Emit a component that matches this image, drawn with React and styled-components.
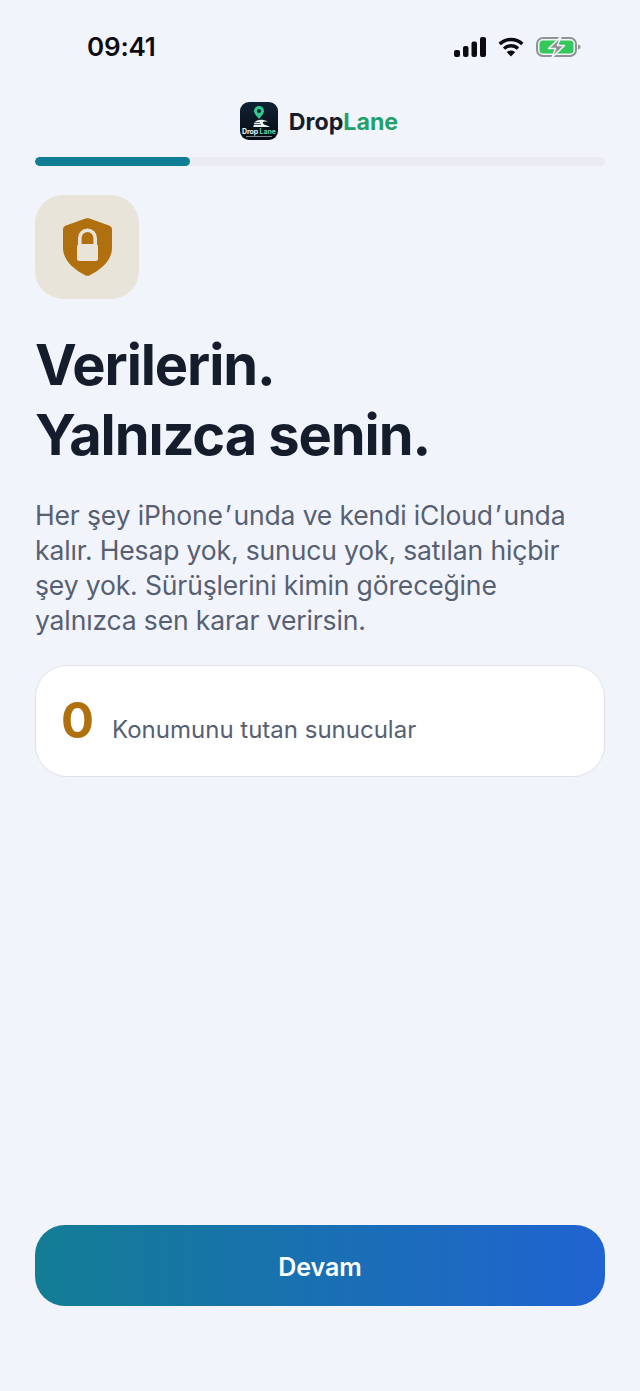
import React from 'react';
import styled, { createGlobalStyle } from 'styled-components';

const Global = createGlobalStyle`
  html, body { margin: 0; padding: 0; background: #f2f4fc; }
  * { box-sizing: border-box; }
`;

const Screen = styled.div`
  width: 640px;
  height: 1391px;
  display: flex;
  flex-direction: column;
  background: #f2f4fc;
  font-family: Inter, "Noto Sans", sans-serif;
  overflow: hidden;
`;

const StatusBar = styled.div`
  height: 102px;
  flex: none;
  display: flex;
  align-items: flex-start;
  justify-content: space-between;
  padding: 31px 59px 0 87px;
`;

const Time = styled.span`
  font-size: 26px;
  line-height: 32px;
  font-weight: 600;
  letter-spacing: -0.2px;
  color: #0c0c10;
`;

const StatusIcons = styled.div`
  display: flex;
  align-items: center;
  gap: 12px;
  height: 32px;
`;

const Brand = styled.div`
  height: 37px;
  flex: none;
  display: flex;
  align-items: center;
  justify-content: center;
  gap: 11px;
  padding-right: 2px;
`;

const LogoTile = styled.div`
  width: 38px;
  height: 38px;
  border-radius: 9px;
  background: linear-gradient(180deg, #0e2334 0%, #070b12 100%);
  display: flex;
  flex-direction: column;
  align-items: center;
  overflow: hidden;
  padding-top: 4px;
`;

const LogoText = styled.span`
  font-size: 7px;
  line-height: 7px;
  font-weight: 700;
  color: #f2f6f5;
  white-space: nowrap;
  letter-spacing: -0.1px;
`;

const LogoGreen = styled.span`
  color: #5fd6ad;
`;

const LogoTagline = styled.span`
  width: 26px;
  height: 1px;
  margin-top: 1px;
  background: #7d8794;
`;

const BrandName = styled.span`
  font-size: 23.2px;
  line-height: 30px;
  font-weight: 700;
  color: #151c2b;
  margin-top: 2px;
`;

const BrandAccent = styled.span`
  color: #23a06a;
`;

const Content = styled.main`
  flex: 1;
  display: flex;
  flex-direction: column;
  padding: 18px 35px 85px;
`;

const Track = styled.div`
  height: 9px;
  border-radius: 5px;
  background: #ebecf1;
  overflow: hidden;
  flex: none;
`;

const Fill = styled.div`
  width: 155px;
  height: 100%;
  border-radius: 5px;
  background: #0f7d94;
`;

const IconTile = styled.div`
  width: 104px;
  height: 104px;
  margin-top: 29px;
  border-radius: 28px;
  background: #e9e4da;
  display: flex;
  align-items: center;
  justify-content: center;
  flex: none;
`;

const Heading = styled.h1`
  margin: 31px 0 0;
  font-size: 56px;
  line-height: 70px;
  font-weight: 700;
  letter-spacing: -1.1px;
  color: #151c2b;
`;

const Body = styled.p`
  margin: 28px 0 0;
  font-size: 26.5px;
  line-height: 35px;
  font-weight: 400;
  letter-spacing: -0.14px;
  color: #566072;
`;

const BodyLine = styled.span`
  display: block;
`;

const Apostrophe = styled.span`
  padding: 0 1.9px;
`;

const StatCard = styled.div`
  margin-top: 27px;
  height: 112px;
  flex: none;
  background: #ffffff;
  border: 1.5px solid #e0e2e7;
  border-radius: 32px;
  display: flex;
  align-items: center;
  gap: 18px;
  padding: 0 25px;
`;

const StatValue = styled.span`
  font-size: 49px;
  line-height: 58px;
  font-weight: 700;
  color: #b0700f;
`;

const StatLabel = styled.span`
  font-size: 24px;
  line-height: 30px;
  color: #566072;
  margin-top: 17px;
`;

const PrimaryButton = styled.button`
  margin-top: auto;
  height: 81px;
  flex: none;
  border: none;
  border-radius: 30px;
  background: linear-gradient(90deg, #137d94 0%, #2063d1 100%);
  color: #ffffff;
  font-family: inherit;
  font-size: 25px;
  font-weight: 600;
  padding: 2px 0 0;
`;

const Signal = () => (
  <svg width="32" height="20" viewBox="0 0 32 20" fill="#0c0c10">
    <rect x="0" y="13" width="6" height="7" rx="2" />
    <rect x="9" y="9" width="5.5" height="11" rx="2" />
    <rect x="17.5" y="4.5" width="5.5" height="15.5" rx="2" />
    <rect x="26" y="0" width="6" height="20" rx="2" />
  </svg>
);

const Wifi = () => (
  <svg width="26" height="20" viewBox="0 0 27 21" fill="none" stroke="#0c0c10" strokeWidth="3.6">
    <path d="M1.6 7.4 C8.2 1 18.8 1 25.4 7.4" />
    <path d="M6.2 12.2 C10.4 8.2 16.6 8.2 20.8 12.2" />
    <path d="M13.5 20.6 L9 15.8 C11.6 13.6 15.4 13.6 18 15.8 Z" fill="#0c0c10" stroke="none" />
  </svg>
);

const Battery = () => (
  <svg width="45" height="22" viewBox="0 0 45 22">
    <rect x="1" y="2" width="39" height="18" rx="6" fill="none" stroke="#8f9492" strokeWidth="2" />
    <rect x="3.5" y="4.5" width="34" height="13" rx="3.5" fill="#34c759" />
    <path d="M42 8.5 C44 9 44.5 10 44.5 11 C44.5 12 44 13 42 13.5 Z" fill="#8f9492" />
    <path d="M25 0.5 L12.5 12.5 L19.5 12.5 L16 21.5 L28.5 9.5 L21.5 9.5 Z" fill="#8f9492" stroke="#f2f4fc" strokeWidth="1.6" strokeLinejoin="round" />
  </svg>
);

const LogoMark = () => (
  <svg width="30" height="22" viewBox="0 0 30 22">
    <path d="M15 13 C11.5 9 10 7 10 5 A5 5 0 0 1 20 5 C20 7 18.5 9 15 13 Z" fill="#31c98e" />
    <circle cx="15" cy="5" r="2" fill="#0e2334" />
    <path d="M9 21 C11 18.5 9 16.5 13 14.5 C16 13.2 20 13.6 24 15.5 C20 15.2 18 16 19 17.6 C20 19 24 19.6 26 21 Z" fill="#eef2f3" />
    <path d="M11 16.5 L16 16.5 M10 18.5 L17 18.5" stroke="#0e2334" strokeWidth="0.7" />
  </svg>
);

const ShieldLock = () => (
  <svg width="49" height="58" viewBox="0 0 49 58">
    <path d="M22.5 0.6 C23.8 0 25.2 0 26.5 0.6 L46 7.6 C48 8.3 49 9.6 49 11.6 L49 30 C49 42 38 52 26.3 57.4 C25.1 58 23.9 58 22.7 57.4 C11 52 0 42 0 30 L0 11.6 C0 9.6 1 8.3 3 7.6 Z" fill="#b0700f" />
    <path d="M16.8 27 L16.8 20 A7.7 7.7 0 0 1 32.2 20 L32.2 27" fill="none" stroke="#e9e4da" strokeWidth="3.6" />
    <rect x="14" y="26" width="21" height="17" rx="2.5" fill="#e9e4da" />
  </svg>
);

export default function App() {
  return (
    <>
      <Global />
      <Screen>
        <StatusBar>
          <Time>09:41</Time>
          <StatusIcons>
            <Signal />
            <Wifi />
            <Battery />
          </StatusIcons>
        </StatusBar>
        <Brand>
          <LogoTile>
            <LogoMark />
            <LogoText>Drop <LogoGreen>Lane</LogoGreen></LogoText>
            <LogoTagline />
          </LogoTile>
          <BrandName>Drop<BrandAccent>Lane</BrandAccent></BrandName>
        </Brand>
        <Content>
          <Track><Fill /></Track>
          <IconTile><ShieldLock /></IconTile>
          <Heading>Verilerin.<br />Yalnızca senin.</Heading>
          <Body>
            <BodyLine>Her şey iPhone<Apostrophe>’</Apostrophe>unda ve kendi iCloud<Apostrophe>’</Apostrophe>unda</BodyLine>
            kalır. Hesap yok, sunucu yok, satılan hiçbir şey yok. Sürüşlerini kimin göreceğine yalnızca sen karar verirsin.
          </Body>
          <StatCard>
            <StatValue>0</StatValue>
            <StatLabel>Konumunu tutan sunucular</StatLabel>
          </StatCard>
          <PrimaryButton>Devam</PrimaryButton>
        </Content>
      </Screen>
    </>
  );
}
